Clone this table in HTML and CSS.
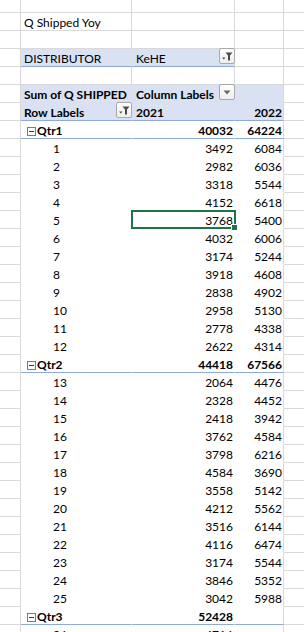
FILE: index.html
```html
<!DOCTYPE html>
<html>
<head>
<meta charset="utf-8">
<link rel="stylesheet" href="styles.css">
</head>
<body>
<div class="sheet">
  <div class="row"><div class="cell a"></div><div class="cell b"></div><div class="cell c"></div><div class="cell d"></div><div class="cell e"></div></div>
  <div class="row"><div class="cell a"></div><div class="cell b">Q Shipped Yoy</div><div class="cell c"></div><div class="cell d"></div><div class="cell e"></div></div>
  <div class="row"><div class="cell a"></div><div class="cell b"></div><div class="cell c"></div><div class="cell d"></div><div class="cell e"></div></div>
  <div class="row flt"><div class="cell a"></div><div class="cell b">DISTRIBUTOR</div><div class="cell c split"><span>KeHE</span><span class="btn"><svg width="14" height="14" viewBox="0 0 14 14"><path d="M5.5 3.5H12.5L10 6.5V11.5H8V6.5Z" fill="#4a4a4a"/><path d="M2 8.5H5.5L3.75 10.5Z" fill="#4a4a4a"/></svg></span></div><div class="cell d"></div><div class="cell e"></div></div>
  <div class="row"><div class="cell a"></div><div class="cell b"></div><div class="cell c"></div><div class="cell d"></div><div class="cell e"></div></div>
  <div class="row hdr"><div class="cell a"></div><div class="cell b">Sum of Q SHIPPED</div><div class="cell c split"><span>Column Labels</span><span class="btn"><svg width="14" height="14" viewBox="0 0 14 14"><path d="M3.5 5.5H10.5L7 9.5Z" fill="#6b6b6b"/></svg></span></div><div class="cell d"></div><div class="cell e"></div></div>
  <div class="row hdr hdr-last"><div class="cell a"></div><div class="cell b split"><span>Row Labels</span><span class="btn"><svg width="14" height="14" viewBox="0 0 14 14"><path d="M5.5 3.5H12.5L10 6.5V11.5H8V6.5Z" fill="#4a4a4a"/><path d="M2 8.5H5.5L3.75 10.5Z" fill="#4a4a4a"/></svg></span></div><div class="cell c">2021</div><div class="cell d num">2022</div><div class="cell e"></div></div>

  <div class="row pv sub"><div class="cell a"></div><div class="cell b grp"><svg class="tog" width="9" height="9" viewBox="0 0 9 9"><rect x="0.5" y="0.5" width="8" height="8" fill="#fff" stroke="#7a7a7a"/><path d="M2 4.5H7" stroke="#3a3a3a"/></svg>Qtr1</div><div class="cell c num">40032</div><div class="cell d num">64224</div><div class="cell e"></div></div>
  <div class="row pv"><div class="cell a"></div><div class="cell b item">1</div><div class="cell c num">3492</div><div class="cell d num">6084</div><div class="cell e"></div></div>
  <div class="row pv"><div class="cell a"></div><div class="cell b item">2</div><div class="cell c num">2982</div><div class="cell d num">6036</div><div class="cell e"></div></div>
  <div class="row pv"><div class="cell a"></div><div class="cell b item">3</div><div class="cell c num">3318</div><div class="cell d num">5544</div><div class="cell e"></div></div>
  <div class="row pv"><div class="cell a"></div><div class="cell b item">4</div><div class="cell c num">4152</div><div class="cell d num">6618</div><div class="cell e"></div></div>
  <div class="row pv"><div class="cell a"></div><div class="cell b item">5</div><div class="cell c num sel">3768</div><div class="cell d num">5400</div><div class="cell e"></div></div>
  <div class="row pv"><div class="cell a"></div><div class="cell b item">6</div><div class="cell c num">4032</div><div class="cell d num">6006</div><div class="cell e"></div></div>
  <div class="row pv"><div class="cell a"></div><div class="cell b item">7</div><div class="cell c num">3174</div><div class="cell d num">5244</div><div class="cell e"></div></div>
  <div class="row pv"><div class="cell a"></div><div class="cell b item">8</div><div class="cell c num">3918</div><div class="cell d num">4608</div><div class="cell e"></div></div>
  <div class="row pv"><div class="cell a"></div><div class="cell b item">9</div><div class="cell c num">2838</div><div class="cell d num">4902</div><div class="cell e"></div></div>
  <div class="row pv"><div class="cell a"></div><div class="cell b item">10</div><div class="cell c num">2958</div><div class="cell d num">5130</div><div class="cell e"></div></div>
  <div class="row pv"><div class="cell a"></div><div class="cell b item">11</div><div class="cell c num">2778</div><div class="cell d num">4338</div><div class="cell e"></div></div>
  <div class="row pv"><div class="cell a"></div><div class="cell b item">12</div><div class="cell c num">2622</div><div class="cell d num">4314</div><div class="cell e"></div></div>

  <div class="row pv sub"><div class="cell a"></div><div class="cell b grp"><svg class="tog" width="9" height="9" viewBox="0 0 9 9"><rect x="0.5" y="0.5" width="8" height="8" fill="#fff" stroke="#7a7a7a"/><path d="M2 4.5H7" stroke="#3a3a3a"/></svg>Qtr2</div><div class="cell c num">44418</div><div class="cell d num">67566</div><div class="cell e"></div></div>
  <div class="row pv"><div class="cell a"></div><div class="cell b item">13</div><div class="cell c num">2064</div><div class="cell d num">4476</div><div class="cell e"></div></div>
  <div class="row pv"><div class="cell a"></div><div class="cell b item">14</div><div class="cell c num">2328</div><div class="cell d num">4452</div><div class="cell e"></div></div>
  <div class="row pv"><div class="cell a"></div><div class="cell b item">15</div><div class="cell c num">2418</div><div class="cell d num">3942</div><div class="cell e"></div></div>
  <div class="row pv"><div class="cell a"></div><div class="cell b item">16</div><div class="cell c num">3762</div><div class="cell d num">4584</div><div class="cell e"></div></div>
  <div class="row pv"><div class="cell a"></div><div class="cell b item">17</div><div class="cell c num">3798</div><div class="cell d num">6216</div><div class="cell e"></div></div>
  <div class="row pv"><div class="cell a"></div><div class="cell b item">18</div><div class="cell c num">4584</div><div class="cell d num">3690</div><div class="cell e"></div></div>
  <div class="row pv"><div class="cell a"></div><div class="cell b item">19</div><div class="cell c num">3558</div><div class="cell d num">5142</div><div class="cell e"></div></div>
  <div class="row pv"><div class="cell a"></div><div class="cell b item">20</div><div class="cell c num">4212</div><div class="cell d num">5562</div><div class="cell e"></div></div>
  <div class="row pv"><div class="cell a"></div><div class="cell b item">21</div><div class="cell c num">3516</div><div class="cell d num">6144</div><div class="cell e"></div></div>
  <div class="row pv"><div class="cell a"></div><div class="cell b item">22</div><div class="cell c num">4116</div><div class="cell d num">6474</div><div class="cell e"></div></div>
  <div class="row pv"><div class="cell a"></div><div class="cell b item">23</div><div class="cell c num">3174</div><div class="cell d num">5544</div><div class="cell e"></div></div>
  <div class="row pv"><div class="cell a"></div><div class="cell b item">24</div><div class="cell c num">3846</div><div class="cell d num">5352</div><div class="cell e"></div></div>
  <div class="row pv"><div class="cell a"></div><div class="cell b item">25</div><div class="cell c num">3042</div><div class="cell d num">5988</div><div class="cell e"></div></div>

  <div class="row pv sub"><div class="cell a"></div><div class="cell b grp"><svg class="tog" width="9" height="9" viewBox="0 0 9 9"><rect x="0.5" y="0.5" width="8" height="8" fill="#fff" stroke="#7a7a7a"/><path d="M2 4.5H7" stroke="#3a3a3a"/></svg>Qtr3</div><div class="cell c num">52428</div><div class="cell d num"></div><div class="cell e"></div></div>
  <div class="row pv"><div class="cell a"></div><div class="cell b item">26</div><div class="cell c num">4716</div><div class="cell d num"></div><div class="cell e"></div></div>
</div>
</body>
</html>
```
FILE: styles.css
```css
* { box-sizing: border-box; }
html, body { margin: 0; padding: 0; background: #fff; overflow: hidden; }
body {
  height: 632px;
  font-family: Lato, "Open Sans", sans-serif;
  font-size: 12px;
  color: #000;
}
.sheet { margin-top: -5px; }
.row {
  display: grid;
  grid-template-columns: 21px 111px 103px 49px 20px;
  height: 18px;
}
.cell {
  height: 18px;
  border-right: 1px solid #d9d9d9;
  border-bottom: 1px solid #d9d9d9;
  padding-top: 3px;
  line-height: 14px;
  white-space: nowrap;
}
.cell.e { border-right: none; }
.cell.b { padding-left: 3px; }
.cell.c { padding-left: 4px; }
.cell.num { text-align: right; padding-left: 0; padding-right: 1px; }

.split {
  display: flex;
  justify-content: space-between;
  align-items: flex-start;
}
.btn {
  width: 16px;
  height: 16px;
  margin-top: -4px;
  margin-right: -1px;
  border: 1px solid #a9a9a9;
  border-radius: 2px;
  background: linear-gradient(#ffffff, #eeeeee);
  display: flex;
  align-items: center;
  justify-content: center;
}
.btn svg { display: block; }

/* report filter row */
.flt .b, .flt .c {
  background: #d9e1f2;
  border-bottom-color: #8ea9db;
}
.flt .b { border-right-color: #d9e1f2; }

/* pivot header rows */
.hdr .b, .hdr .c, .hdr .d {
  background: #d9e1f2;
  border-bottom-color: #d9e1f2;
  border-right-color: #d9e1f2;
  font-weight: 700;
}
.hdr .d { border-right-color: #d9d9d9; }
.hdr-last .b, .hdr-last .c, .hdr-last .d { border-bottom-color: #8ea9db; }

/* pivot body */
.pv .b, .pv .c {
  background: #fff;
  border-right-color: #fff;
  border-bottom-color: #fff;
}
.pv .d { border-bottom-color: #fff; }
.item { padding-left: 32px !important; }
.grp { padding-left: 6px !important; display: flex; align-items: flex-start; }
.tog { display: block; margin-top: 3px; margin-right: 1px; flex: none; }
.sub .b, .sub .c, .sub .d {
  font-weight: 700;
  border-bottom-color: #8ea9db;
}

/* selected cell */
.sel { position: relative; }
.sel::before {
  content: "";
  position: absolute;
  left: -1px;
  top: -1px;
  right: -2px;
  bottom: -1px;
  border: 2px solid #217346;
}
.sel::after {
  content: "";
  position: absolute;
  right: -4px;
  bottom: -3px;
  width: 5px;
  height: 5px;
  background: #217346;
  border: 1px solid #fff;
}
```
